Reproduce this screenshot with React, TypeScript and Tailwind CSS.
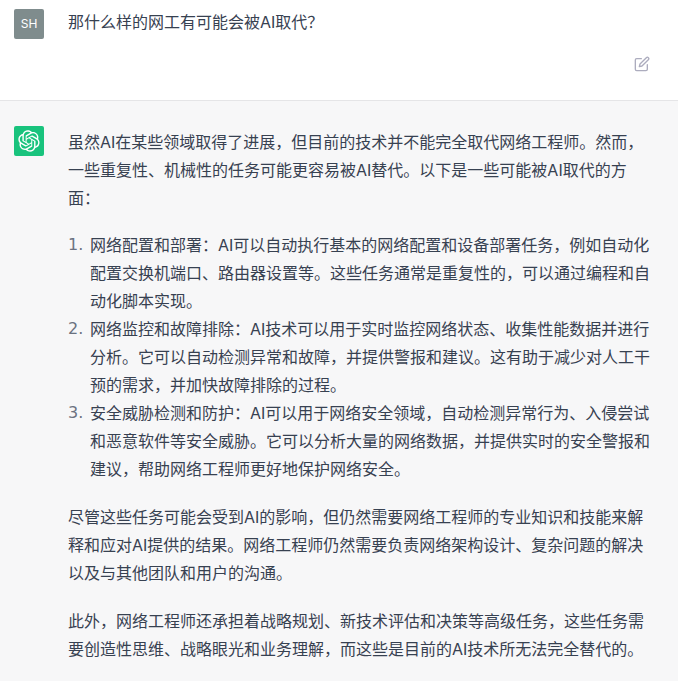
const LOGO = "M37.5324 16.8707C37.9808 15.5241 38.1363 14.0974 37.9886 12.6859C37.8409 11.2744 37.3934 9.91076 36.676 8.68622C35.6126 6.83404 33.9882 5.3676 32.0373 4.4985C30.0864 3.62941 27.9098 3.40259 25.8215 3.85078C24.8796 2.7893 23.7219 1.94125 22.4257 1.36341C21.1295 0.785575 19.7249 0.491269 18.3058 0.500197C16.1708 0.495044 14.0893 1.16803 12.3614 2.42214C10.6335 3.67624 9.34853 5.44666 8.6917 7.47815C7.30085 7.76286 5.98686 8.3414 4.8377 9.17505C3.68854 10.0087 2.73073 11.0782 2.02839 12.312C0.956464 14.1591 0.498905 16.2988 0.721698 18.4228C0.944492 20.5467 1.83612 22.5449 3.268 24.1293C2.81966 25.4759 2.66413 26.9026 2.81182 28.3141C2.95951 29.7256 3.40701 31.0892 4.12437 32.3138C5.18791 34.1659 6.8123 35.6322 8.76321 36.5013C10.7141 37.3704 12.8907 37.5973 14.9789 37.1492C15.9208 38.2107 17.0786 39.0587 18.3747 39.6366C19.6709 40.2144 21.0755 40.5087 22.4946 40.4998C24.6307 40.5054 26.7133 39.8321 28.4418 38.5772C30.1704 37.3223 31.4556 35.5506 32.1119 33.5179C33.5027 33.2332 34.8167 32.6547 35.9659 31.821C37.115 30.9874 38.0728 29.9178 38.7752 28.684C39.8458 26.8371 40.3023 24.6979 40.0789 22.5748C39.8556 20.4517 38.9639 18.4544 37.5324 16.8707ZM22.4978 37.8849C20.7443 37.8874 19.0459 37.2733 17.6994 36.1501C17.7601 36.117 17.8666 36.0586 17.936 36.0161L25.9004 31.4156C26.1003 31.3019 26.2663 31.137 26.3813 30.9378C26.4964 30.7386 26.5563 30.5124 26.5549 30.2825V19.0542L29.9213 20.998C29.9389 21.0068 29.9541 21.0198 29.9656 21.0359C29.977 21.052 29.9842 21.0707 29.9867 21.0902V30.3889C29.9842 32.375 29.1946 34.2791 27.7909 35.6841C26.3872 37.0892 24.4838 37.8806 22.4978 37.8849ZM6.39227 31.0064C5.51397 29.4888 5.19742 27.7107 5.49804 25.9832C5.55718 26.0187 5.66048 26.0818 5.73461 26.1244L13.699 30.7248C13.8975 30.8408 14.1233 30.902 14.3532 30.902C14.583 30.902 14.8088 30.8408 15.0073 30.7248L24.731 25.1103V28.9979C24.7321 29.0177 24.7283 29.0376 24.7199 29.0556C24.7115 29.0736 24.6988 29.0893 24.6829 29.1012L16.6317 33.7497C14.9096 34.7416 12.8643 35.0097 10.9447 34.4954C9.02506 33.9811 7.38785 32.7263 6.39227 31.0064ZM4.29707 13.6194C5.17156 12.0998 6.55279 10.9364 8.19885 10.3327C8.19885 10.4013 8.19491 10.5228 8.19491 10.6071V19.808C8.19351 20.0378 8.25334 20.2638 8.36823 20.4629C8.48312 20.6619 8.64893 20.8267 8.84863 20.9404L18.5723 26.5542L15.206 28.4979C15.1894 28.5089 15.1703 28.5155 15.1505 28.5173C15.1307 28.5191 15.1107 28.516 15.0924 28.5082L7.04046 23.8557C5.32135 22.8601 4.06716 21.2235 3.55289 19.3046C3.03862 17.3858 3.30624 15.3413 4.29707 13.6194ZM31.955 20.0556L22.2312 14.4411L25.5976 12.4981C25.6142 12.4872 25.6333 12.4805 25.6531 12.4787C25.6729 12.4769 25.6928 12.4801 25.7111 12.4879L33.7631 17.1364C34.9967 17.849 36.0017 18.8982 36.6606 20.1613C37.3194 21.4244 37.6047 22.849 37.4832 24.2684C37.3617 25.6878 36.8382 27.0432 35.9743 28.1759C35.1103 29.3086 33.9415 30.1717 32.6047 30.6641C32.6047 30.5947 32.6047 30.4733 32.6047 30.3889V21.188C32.6066 20.9586 32.5474 20.7328 32.4332 20.5338C32.319 20.3348 32.154 20.1698 31.955 20.0556ZM35.3055 15.0128C35.2464 14.9765 35.1431 14.9142 35.069 14.8717L27.1045 10.2712C26.906 10.1554 26.6803 10.0943 26.4504 10.0943C26.2206 10.0943 25.9948 10.1554 25.7963 10.2712L16.0726 15.8858V11.9982C16.0715 11.9783 16.0753 11.9585 16.0837 11.9405C16.0921 11.9225 16.1048 11.9068 16.1207 11.8949L24.1719 7.25025C25.4053 6.53903 26.8158 6.19376 28.2383 6.25482C29.6608 6.31589 31.0364 6.78077 32.2044 7.59508C33.3723 8.40939 34.2842 9.53945 34.8334 10.8531C35.3826 12.1667 35.5464 13.6095 35.3055 15.0128ZM14.2424 21.9419L10.8752 19.9981C10.8576 19.9893 10.8423 19.9763 10.8309 19.9602C10.8195 19.9441 10.8122 19.9254 10.8098 19.9058V10.6071C10.8107 9.18295 11.2173 7.78848 11.9819 6.58696C12.7466 5.38544 13.8377 4.42659 15.1275 3.82264C16.4173 3.21869 17.8524 2.99464 19.2649 3.1767C20.6775 3.35876 22.0089 3.93941 23.1034 4.85067C23.0427 4.88379 22.937 4.94215 22.8668 4.98473L14.9024 9.58517C14.7025 9.69878 14.5366 9.86356 14.4215 10.0626C14.3065 10.2616 14.2466 10.4877 14.2479 10.7175L14.2424 21.9419ZM16.071 17.9991L20.4018 15.4978L24.7325 17.9975V22.9985L20.4018 25.4983L16.071 22.9985V17.9991Z";

const C = "\uFF0C";
const K = "\uFF1A";
const Q = "\uFF1F";

const ITEMS = [
  `网络配置和部署${K}AI可以自动执行基本的网络配置和设备部署任务${C}例如自动化配置交换机端口、路由器设置等。这些任务通常是重复性的${C}可以通过编程和自动化脚本实现。`,
  `网络监控和故障排除${K}AI技术可以用于实时监控网络状态、收集性能数据并进行分析。它可以自动检测异常和故障${C}并提供警报和建议。这有助于减少对人工干预的需求${C}并加快故障排除的过程。`,
  `安全威胁检测和防护${K}AI可以用于网络安全领域${C}自动检测异常行为、入侵尝试和恶意软件等安全威胁。它可以分析大量的网络数据${C}并提供实时的安全警报和建议${C}帮助网络工程师更好地保护网络安全。`,
];

export default function App() {
  return (
    <div className="w-[678px] h-[681px] overflow-hidden bg-white text-[16px] leading-[28px] text-[#374151] font-['Inter','Noto_Sans_CJK_SC',sans-serif]">
      <div className="h-[101px] border-b border-[#e5e5e7] bg-white flex pl-[14px] pt-[9px]">
        <div className="w-[30px] h-[30px] shrink-0 rounded-[2px] bg-[#7f8c8d] text-white text-[12px] leading-[30px] text-center">SH</div>
        <div className="flex-1 pl-[24px] pr-[28px] flex flex-col">
          <div className="leading-[26px]">{`那什么样的网工有可能会被AI取代${Q}`}</div>
          <div className="flex justify-end mt-[21px]">
            <svg width="16" height="16" viewBox="0 0 24 24" fill="none" stroke="#acacbe" strokeWidth="2" strokeLinecap="round" strokeLinejoin="round">
              <path d="M11 4H4a2 2 0 0 0-2 2v14a2 2 0 0 0 2 2h14a2 2 0 0 0 2-2v-7" />
              <path d="M18.5 2.5a2.121 2.121 0 0 1 3 3L12 15l-4 1 1-4 9.5-9.5z" />
            </svg>
          </div>
        </div>
      </div>
      <div className="bg-[#f7f7f8] flex pl-[14px] pt-[25px] h-[580px]">
        <div className="w-[30px] h-[30px] shrink-0 rounded-[2px] bg-[#19c37d] flex items-center justify-center">
          <svg width="22" height="22" viewBox="0 0 41 41" fill="none">
            <path d={LOGO} fill="white" />
          </svg>
        </div>
        <div className="w-[584px] ml-[24px] shrink-0">
          <p className="mt-[2px]">{`虽然AI在某些领域取得了进展${C}但目前的技术并不能完全取代网络工程师。然而${C}一些重复性、机械性的任务可能更容易被AI替代。以下是一些可能被AI取代的方面${K}`}</p>
          <ol className="mt-[19px] mb-[20px]">
            {ITEMS.map((text, i) => (
              <li key={i} className="flex">
                <span className="w-[22px] shrink-0 text-[#6b7280] font-['DejaVu_Sans',sans-serif]">{i + 1}.</span>
                <span className="flex-1 min-w-0">{text}</span>
              </li>
            ))}
          </ol>
          <p className="mb-[20px]">{`尽管这些任务可能会受到AI的影响${C}但仍然需要网络工程师的专业知识和技能来解释和应对AI提供的结果。网络工程师仍然需要负责网络架构设计、复杂问题的解决以及与其他团队和用户的沟通。`}</p>
          <p>{`此外${C}网络工程师还承担着战略规划、新技术评估和决策等高级任务${C}这些任务需要创造性思维、战略眼光和业务理解${C}而这些是目前的AI技术所无法完全替代的。`}</p>
        </div>
      </div>
    </div>
  );
}
